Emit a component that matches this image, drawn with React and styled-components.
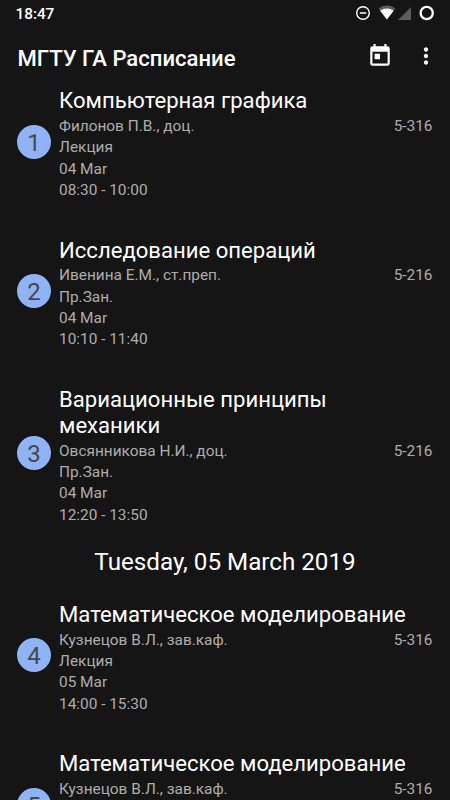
import React from 'react';
import styled, { createGlobalStyle } from 'styled-components';

const GlobalStyle = createGlobalStyle`
  * {
    box-sizing: border-box;
  }

  body {
    margin: 0;
    background: #151515;
    font-family: Roboto, sans-serif;
    overflow: hidden;
  }
`;

const Screen = styled.div`
  display: flex;
  flex-direction: column;
  width: 450px;
  height: 800px;
  overflow: hidden;
  background: #151515;
  color: #fff;
`;

const StatusBar = styled.div`
  display: flex;
  flex: none;
  justify-content: space-between;
  height: 26px;
  padding: 0 15px 0 15.5px;
`;

const Clock = styled.span`
  font-size: 15.3px;
  font-weight: 500;
  line-height: 28px;
`;

const StatusIcons = styled.svg`
  width: 80px;
  height: 26px;
`;

const AppBar = styled.header`
  display: flex;
  flex: none;
  align-items: center;
  height: 61px;
  padding: 2px 11px 0 17.5px;
`;

const AppTitle = styled.h1`
  flex: 1;
  margin: 0;
  font-size: 22.1px;
  font-weight: 500;
  line-height: 28px;
`;

const IconButton = styled.button`
  display: flex;
  padding: 0;
  margin: 0 0 3px ${props => props.gap || 0};
  border: 0;
  background: none;
  color: #fff;

  svg {
    width: 26px;
    height: 26px;
    fill: currentColor;
  }
`;

const Schedule = styled.main`
  flex: 1;
  min-height: 0;
  padding-top: 0.2px;
  overflow: hidden;
`;

const DayHeading = styled.h2`
  height: 62.6px;
  margin: 0;
  padding-top: 10px;
  font-size: 24.2px;
  font-weight: 400;
  line-height: 28px;
  text-align: center;
`;

const LessonRow = styled.article`
  display: flex;
  align-items: center;
  padding: 0 17.5px 0 17px;
  margin-bottom: ${props => (props.last ? '12.5px' : '35.5px')};
`;

const Badge = styled.div`
  flex: none;
  width: 34px;
  height: 34px;
  margin: 0 8px 5px 0;
  border-radius: 50%;
  background: #8fb3f5;
  color: #484848;
  font-size: 24px;
  line-height: 36px;
  text-align: center;
`;

const LessonBody = styled.div`
  flex: 1;
`;

const Subject = styled.h3`
  margin: 0 20px 2.9px 0;
  font-size: 22.1px;
  font-weight: 400;
  line-height: 26px;
`;

const Detail = styled.div`
  display: flex;
  justify-content: space-between;
  color: #adadad;
  font-size: 15.4px;
  line-height: 21.25px;
`;

const days = [
  {
    lessons: [
      { number: 1, subject: 'Компьютерная графика', teacher: 'Филонов П.В., доц.', room: '5-316', type: 'Лекция', date: '04 Mar', time: '08:30 - 10:00' },
      { number: 2, subject: 'Исследование операций', teacher: 'Ивенина Е.М., ст.преп.', room: '5-216', type: 'Пр.Зан.', date: '04 Mar', time: '10:10 - 11:40' },
      { number: 3, subject: 'Вариационные принципы механики', teacher: 'Овсянникова Н.И., доц.', room: '5-216', type: 'Пр.Зан.', date: '04 Mar', time: '12:20 - 13:50' },
    ],
  },
  {
    heading: 'Tuesday, 05 March 2019',
    lessons: [
      { number: 4, subject: 'Математическое моделирование', teacher: 'Кузнецов В.Л., зав.каф.', room: '5-316', type: 'Лекция', date: '05 Mar', time: '14:00 - 15:30' },
      { number: 5, subject: 'Математическое моделирование', teacher: 'Кузнецов В.Л., зав.каф.', room: '5-316', type: 'Лекция', date: '05 Mar', time: '15:40 - 17:10' },
    ],
  },
];

function Lesson({ lesson, last }) {
  return (
    <LessonRow last={last}>
      <Badge>{lesson.number}</Badge>
      <LessonBody>
        <Subject>{lesson.subject}</Subject>
        <Detail>
          <span>{lesson.teacher}</span>
          <span>{lesson.room}</span>
        </Detail>
        <Detail>{lesson.type}</Detail>
        <Detail>{lesson.date}</Detail>
        <Detail>{lesson.time}</Detail>
      </LessonBody>
    </LessonRow>
  );
}

export default function App() {
  return (
    <Screen>
      <GlobalStyle />
      <StatusBar>
        <Clock>18:47</Clock>
        <StatusIcons viewBox="0 0 80 26">
          <g fill="none" stroke="#fff">
            <circle cx="8" cy="13" r="6.3" strokeWidth="1.4" />
            <path d="M4.8 13h6.4" strokeWidth="1.5" />
            <circle cx="71.7" cy="13" r="6.1" strokeWidth="2.3" />
          </g>
          <path d="M23.4 8.6a13.5 13.5 0 0 1 17 0L31.9 19.4z" fill="#5c5c5c" />
          <path d="M25.2 10.8a10.6 10.6 0 0 1 13.4 0l-6.7 8.6z" fill="#fff" />
          <path d="M43 20L56 7v13z" fill="#5c5c5c" />
        </StatusIcons>
      </StatusBar>
      <AppBar>
        <AppTitle>МГТУ ГА Расписание</AppTitle>
        <IconButton aria-label="Today">
          <svg viewBox="0 0 24 24">
            <path d="M19 3h-1V1h-2v2H8V1H6v2H5c-1.11 0-1.99.9-1.99 2L3 19c0 1.1.89 2 2 2h14c1.1 0 2-.9 2-2V5c0-1.1-.9-2-2-2zm0 16H5V8h14v11zM7 10h5v5H7z" />
          </svg>
        </IconButton>
        <IconButton aria-label="More" gap="20px">
          <svg viewBox="0 0 24 24">
            <path d="M12 8c1.1 0 2-.9 2-2s-.9-2-2-2-2 .9-2 2 .9 2 2 2zm0 2c-1.1 0-2 .9-2 2s.9 2 2 2 2-.9 2-2-.9-2-2-2zm0 6c-1.1 0-2 .9-2 2s.9 2 2 2 2-.9 2-2-.9-2-2-2z" />
          </svg>
        </IconButton>
      </AppBar>
      <Schedule>
        {days.map((day, i) => (
          <section key={i}>
            {day.heading && <DayHeading>{day.heading}</DayHeading>}
            {day.lessons.map((lesson, j) => (
              <Lesson key={lesson.number} lesson={lesson} last={j === day.lessons.length - 1} />
            ))}
          </section>
        ))}
      </Schedule>
    </Screen>
  );
}
